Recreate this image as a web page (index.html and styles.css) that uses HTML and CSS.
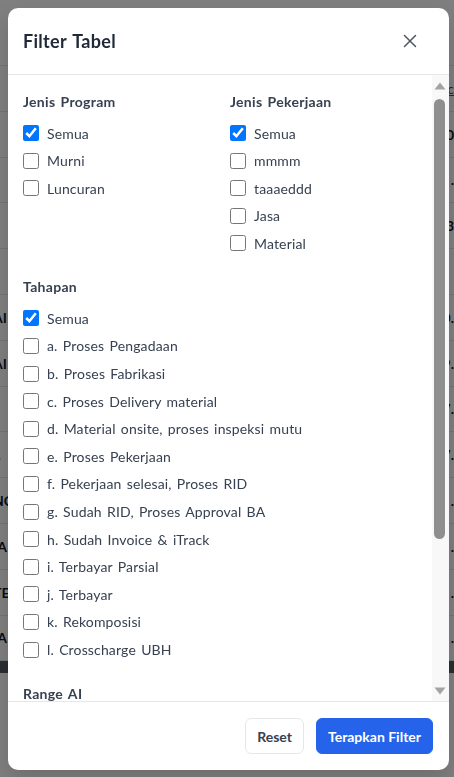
FILE: index.html
```html
<!DOCTYPE html>
<html lang="id">
<head>
<meta charset="utf-8">
<title>Filter Tabel</title>
<link rel="stylesheet" href="styles.css">
</head>
<body>
<div class="page">
  <div class="page-top"></div>
  <div class="row"><span class="l"></span><span class="r link">c</span></div>
  <div class="row"><span class="l"></span><span class="r">0</span></div>
  <div class="row"><span class="l"></span><span class="r">.</span></div>
  <div class="row"><span class="l"></span><span class="r">3</span></div>
  <div class="row"><span class="l"></span><span class="r"></span></div>
  <div class="row"><span class="l">AI</span><span class="r">0.</span></div>
  <div class="row"><span class="l">AI</span><span class="r">9.</span></div>
  <div class="row"><span class="l"></span><span class="r">7.</span></div>
  <div class="row"><span class="l">L</span><span class="r">7.</span></div>
  <div class="row"><span class="l">NC</span><span class="r">.</span></div>
  <div class="row"><span class="l">IA</span><span class="r">.</span></div>
  <div class="row"><span class="l">TE</span><span class="r">.</span></div>
  <div class="row"><span class="l">IA</span><span class="r">.</span></div>
  <div class="hscroll"></div>
</div>

<div class="overlay">
  <div class="modal">
    <header class="modal-header">
      <h2 class="modal-title">Filter Tabel</h2>
      <button class="close-btn" type="button" aria-label="Tutup">
        <svg viewBox="0 0 24 24" width="22" height="22" fill="none" stroke="currentColor" stroke-width="1.6" stroke-linecap="round" stroke-linejoin="round"><path d="M6 18L18 6M6 6l12 12"/></svg>
      </button>
    </header>

    <div class="body-wrap">
      <div class="modal-body">
        <div class="two-col">
          <section class="group">
            <h3 class="group-title">Jenis Program</h3>
            <div class="options">
              <label class="opt"><input type="checkbox" checked><span>Semua</span></label>
              <label class="opt"><input type="checkbox"><span>Murni</span></label>
              <label class="opt"><input type="checkbox"><span>Luncuran</span></label>
            </div>
          </section>
          <section class="group">
            <h3 class="group-title">Jenis Pekerjaan</h3>
            <div class="options">
              <label class="opt"><input type="checkbox" checked><span>Semua</span></label>
              <label class="opt"><input type="checkbox"><span>mmmm</span></label>
              <label class="opt"><input type="checkbox"><span>taaaeddd</span></label>
              <label class="opt"><input type="checkbox"><span>Jasa</span></label>
              <label class="opt"><input type="checkbox"><span>Material</span></label>
            </div>
          </section>
        </div>

        <section class="group">
          <h3 class="group-title">Tahapan</h3>
          <div class="options">
            <label class="opt"><input type="checkbox" checked><span>Semua</span></label>
            <label class="opt"><input type="checkbox"><span>a. Proses Pengadaan</span></label>
            <label class="opt"><input type="checkbox"><span>b. Proses Fabrikasi</span></label>
            <label class="opt"><input type="checkbox"><span>c. Proses Delivery material</span></label>
            <label class="opt"><input type="checkbox"><span>d. Material onsite, proses inspeksi mutu</span></label>
            <label class="opt"><input type="checkbox"><span>e. Proses Pekerjaan</span></label>
            <label class="opt"><input type="checkbox"><span>f. Pekerjaan selesai, Proses RID</span></label>
            <label class="opt"><input type="checkbox"><span>g. Sudah RID, Proses Approval BA</span></label>
            <label class="opt"><input type="checkbox"><span>h. Sudah Invoice &amp; iTrack</span></label>
            <label class="opt"><input type="checkbox"><span>i. Terbayar Parsial</span></label>
            <label class="opt"><input type="checkbox"><span>j. Terbayar</span></label>
            <label class="opt"><input type="checkbox"><span>k. Rekomposisi</span></label>
            <label class="opt"><input type="checkbox"><span>l. Crosscharge UBH</span></label>
          </div>
        </section>

        <section class="group">
          <h3 class="group-title">Range AI</h3>
          <div class="range">
            <label class="field"><span>Minimum</span><input type="number" placeholder="0"></label>
            <label class="field"><span>Maksimum</span><input type="number" placeholder="0"></label>
          </div>
        </section>

        <section class="group">
          <h3 class="group-title">Tahun</h3>
          <select class="select"><option>Semua Tahun</option></select>
        </section>
      </div>

      <div class="scrollbar" aria-hidden="true">
        <svg class="arrow" viewBox="0 0 12 8" width="12" height="8"><path d="M6 0.5 L11.5 7.5 H0.5 Z" fill="#a3a3a3"/></svg>
        <div class="thumb"></div>
        <div class="track-rest"></div>
        <svg class="arrow" viewBox="0 0 12 8" width="12" height="8"><path d="M0.5 0.5 H11.5 L6 7.5 Z" fill="#a3a3a3"/></svg>
      </div>
    </div>

    <footer class="modal-footer">
      <button class="btn btn-light" type="button">Reset</button>
      <button class="btn btn-primary" type="button">Terapkan Filter</button>
    </footer>
  </div>
</div>
</body>
</html>
```

FILE: styles.css
```css
* { box-sizing: border-box; }

html, body {
  margin: 0;
  height: 100%;
}

body {
  font-family: Lato, "Liberation Sans", sans-serif;
  background: #ffffff;
  overflow: hidden;
}

/* background page (under the overlay) */
.page {
  height: 100%;
  font-size: 14px;
  color: #111827;
}
.page-top {
  height: 66px;
  border-bottom: 1px solid #e5e7eb;
}
.row {
  height: 45.8px;
  display: flex;
  justify-content: space-between;
  align-items: center;
  border-bottom: 1px solid #e5e7eb;
}
.row .l { margin-left: -7px; font-weight: 700; }
.row .r { font-weight: 700; }
.row .link {
  color: #1d4ed8;
  font-weight: 400;
  text-decoration: underline;
}
.hscroll {
  height: 12px;
  background: #555a63;
}

.overlay {
  position: fixed;
  inset: 0;
  background: rgba(0, 0, 0, 0.5);
  padding: 8px 5px 7px 8px;
  display: flex;
}

.modal {
  width: 441px;
  height: 100%;
  background: #ffffff;
  border-radius: 10px;
  display: flex;
  flex-direction: column;
  overflow: hidden;
  box-shadow: 0 10px 25px rgba(0, 0, 0, 0.15);
}

.modal-header {
  height: 67px;
  flex: none;
  display: flex;
  align-items: center;
  justify-content: space-between;
  padding: 0 24px 0 15px;
  border-bottom: 1px solid #e5e7eb;
}
.modal-title {
  margin: 0;
  font-size: 18px;
  font-weight: 700;
  color: #1f2937;
  letter-spacing: 0.3px;
  word-spacing: 1.5px;
}
.close-btn {
  border: 0;
  background: transparent;
  padding: 4px;
  display: flex;
  color: #4b5563;
  cursor: pointer;
}

.body-wrap {
  flex: 1;
  min-height: 0;
  position: relative;
  display: flex;
}

.modal-body {
  flex: 1;
  overflow-y: auto;
  scrollbar-width: none;
  padding: 17px 30px 16px 15px;
  display: flex;
  flex-direction: column;
  gap: 24px;
}

.scrollbar {
  position: absolute;
  top: 0;
  right: 0;
  bottom: 0;
  width: 17px;
  background: #f8f8f8;
  display: flex;
  flex-direction: column;
  align-items: center;
  padding: 7px 2px 6px 0;
}
.scrollbar .arrow {
  flex: none;
  display: block;
}
.thumb {
  flex: none;
  width: 11px;
  height: 440px;
  margin-top: 9px;
  border-radius: 6px;
  background: #8f8f8f;
}
.track-rest { flex: 1; }

.two-col {
  display: grid;
  grid-template-columns: 1fr 1fr;
  column-gap: 18px;
}

.group-title {
  margin: 0 0 11px;
  font-size: 14px;
  line-height: 20px;
  font-weight: 700;
  color: #374151;
  letter-spacing: 0.3px;
  word-spacing: 1.5px;
}

.options {
  display: flex;
  flex-direction: column;
  gap: 7.6px;
}

.opt {
  display: flex;
  align-items: center;
  gap: 8px;
  height: 20px;
  font-size: 14px;
  color: #374151;
  letter-spacing: 0.15px;
  word-spacing: 1.5px;
}
.opt input {
  width: 16px;
  height: 16px;
  margin: 0;
  flex: none;
}

.range {
  display: grid;
  grid-template-columns: 1fr 1fr;
  gap: 12px;
}
.field {
  display: flex;
  flex-direction: column;
  gap: 6px;
  font-size: 13px;
  color: #4b5563;
}
.field input,
.select {
  height: 38px;
  border: 1px solid #d1d5db;
  border-radius: 6px;
  padding: 0 10px;
  font: inherit;
  font-size: 14px;
  width: 100%;
}

.modal-footer {
  flex: none;
  border-top: 1px solid #e5e7eb;
  padding: 16px;
  display: flex;
  justify-content: flex-end;
  gap: 12px;
}

.btn {
  height: 36px;
  padding: 0 11px;
  border-radius: 6px;
  font-family: inherit;
  font-size: 14px;
  font-weight: 700;
  cursor: pointer;
}
.btn-light {
  background: #ffffff;
  border: 1px solid #e5e7eb;
  color: #374151;
}
.btn-primary {
  background: #2563eb;
  border: 1px solid #2563eb;
  color: #ffffff;
}
```
